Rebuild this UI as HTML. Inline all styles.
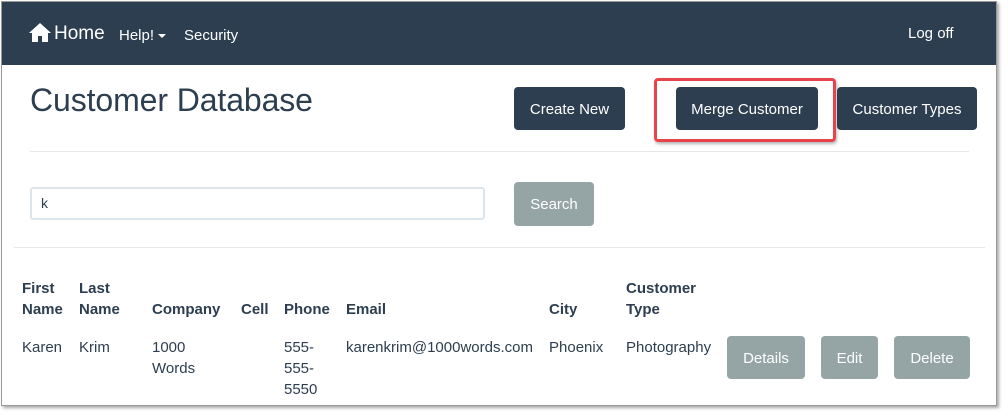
<!DOCTYPE html>
<html><head><style>
body{margin:0;width:1008px;height:417px;background:#fff;font-family:"Liberation Sans",sans-serif;position:relative;overflow:hidden;color:#2c3e50}
.frame{position:absolute;left:1px;top:1px;width:994px;height:403px;border:1px solid #9a9a9a;box-shadow:2px 2px 3px rgba(0,0,0,.35);background:#fff;overflow:hidden}
.nav{position:absolute;left:0;top:0;width:994px;height:63px;background:#2c3e50;color:#fff}
.abs{position:absolute}
.btn{position:absolute;background:#2c3e50;color:#fff;border-radius:4px;font-size:15px;display:flex;align-items:center;justify-content:center;padding-top:1px;box-sizing:border-box}
.g{background:#95a5a6}
.t{position:absolute;font-size:15px;color:#2c3e50}
.b{font-weight:bold}
</style></head><body>
<div class="frame">
<div class="nav">
<svg class="abs" style="left:27px;top:21px" width="22" height="19" viewBox="0 0 22 19"><path d="M11 0L0 10h3v9h6v-6h4v6h6v-9h3z" fill="#fff"/></svg>
<div class="abs" style="left:52px;top:21px;font-size:19px">Home</div>
<div class="abs" style="left:117px;top:25px;font-size:15px">Help! <span style="display:inline-block;width:0;height:0;border-left:4px solid transparent;border-right:4px solid transparent;border-top:4px solid #fff;vertical-align:middle"></span></div>
<div class="abs" style="left:182px;top:25px;font-size:15px">Security</div>
<div class="abs" style="left:906px;top:23px;font-size:15px">Log off</div>
</div>
<div class="abs" style="left:28px;top:80px;font-size:32px;color:#2c3e50;letter-spacing:-0.1px">Customer Database</div>
<div class="btn" style="left:512px;top:85px;width:111px;height:43px">Create New</div>
<div class="abs" style="left:652px;top:76px;width:176px;height:58px;border:3px solid #e8434a;border-radius:4px;box-shadow:1px 2px 3px rgba(0,0,0,.3)"></div>
<div class="btn" style="left:674px;top:85px;width:142px;height:43px">Merge Customer</div>
<div class="btn" style="left:835px;top:85px;width:140px;height:43px">Customer Types</div>
<div class="abs" style="left:28px;top:149px;width:939px;height:1px;background:#e6e6e6"></div>
<div class="abs" style="left:28px;top:185px;width:451px;height:29px;border:2px solid #dce4ec;border-radius:3px;font-size:14px;line-height:29px;text-indent:9px">k</div>
<div class="btn g" style="left:512px;top:180px;width:80px;height:44px">Search</div>
<div class="abs" style="left:12px;top:245px;width:971px;height:1px;background:#e6e6e6"></div>
<div class="t b" style="left:20px;top:276px;line-height:21px">First<br>Name</div>
<div class="t b" style="left:77px;top:276px;line-height:21px">Last<br>Name</div>
<div class="t b" style="left:150px;top:299px">Company</div>
<div class="t b" style="left:239px;top:299px">Cell</div>
<div class="t b" style="left:282px;top:299px">Phone</div>
<div class="t b" style="left:344px;top:299px">Email</div>
<div class="t b" style="left:547px;top:299px">City</div>
<div class="t b" style="left:624px;top:276px;line-height:21px">Customer<br>Type</div>
<div class="t" style="left:20px;top:337px">Karen</div>
<div class="t" style="left:77px;top:337px">Krim</div>
<div class="t" style="left:150px;top:335px;line-height:21px">1000<br>Words</div>
<div class="t" style="left:282px;top:335px;line-height:21px">555-<br>555-<br>5550</div>
<div class="t" style="left:344px;top:337px">karenkrim@1000words.com</div>
<div class="t" style="left:547px;top:337px">Phoenix</div>
<div class="t" style="left:624px;top:337px">Photography</div>
<div class="btn g" style="left:725px;top:334px;width:78px;height:43px">Details</div>
<div class="btn g" style="left:819px;top:334px;width:57px;height:43px">Edit</div>
<div class="btn g" style="left:892px;top:334px;width:76px;height:43px">Delete</div>
</div>
</body></html>
